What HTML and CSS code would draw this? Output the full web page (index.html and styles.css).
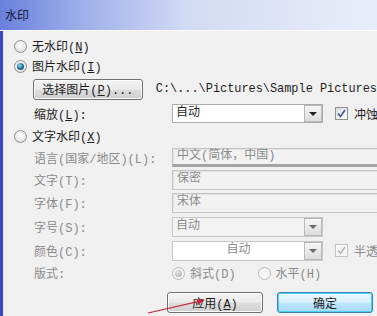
FILE: index.html
```html
<!DOCTYPE html>
<html lang="zh-CN">
<head>
  <meta charset="UTF-8" />
  <title>水印</title>
  <link rel="stylesheet" href="styles.css">
</head>
<body>
  <div class="titlebar">水印</div>

  <div class="dialog">
    <div class="row opt-none"><span class="radio"></span><span>无水印(<u>N</u>)</span></div>
    <div class="row opt-pic"><span class="radio on"></span><span>图片水印(<u>I</u>)</span></div>

    <div class="row field pick-row">
      <button class="btn pick">选择图片(<u>P</u>)...</button>
      <span class="path">C:\...\Pictures\Sample Pictures</span>
    </div>
    <div class="row field scale-row">
      <span class="label">缩放(<u>L</u>):</span>
      <div class="combo"><span class="val">自动</span><span class="drop"><i></i></span></div>
      <span class="check on">
        <svg width="11" height="11" viewBox="0 0 11 11"><path d="M2 5.5 L4.5 8.5 L9 2" fill="none" stroke="#3d5a9a" stroke-width="1.6"/></svg>
      </span>
      <span class="check-text">冲蚀</span>
    </div>

    <div class="row opt-text"><span class="radio"></span><span>文字水印(<u>X</u>)</span></div>

    <div class="row field off lang-row">
      <span class="label">语言(国家/地区)(L):</span>
      <div class="box lang">中文(简体，中国)</div>
    </div>
    <div class="row field off text-row">
      <span class="label">文字(T):</span>
      <div class="box">保密</div>
    </div>
    <div class="row field off font-row">
      <span class="label">字体(F):</span>
      <div class="box">宋体</div>
    </div>
    <div class="row field off size-row">
      <span class="label">字号(S):</span>
      <div class="combo dim"><span class="val">自动</span><span class="drop"><i></i></span></div>
    </div>
    <div class="row field off color-row">
      <span class="label">颜色(C):</span>
      <div class="combo"><span class="val center">自动</span><span class="drop"><i></i></span></div>
      <span class="check dim">
        <svg width="11" height="11" viewBox="0 0 11 11"><path d="M2 5.5 L4.5 8.5 L9 2" fill="none" stroke="#b4b4b4" stroke-width="1.4"/></svg>
      </span>
      <span class="check-text">半透</span>
    </div>
    <div class="row field off layout-row">
      <span class="label">版式:</span>
      <span class="radio dim on"></span><span class="layout-opt">斜式(D)</span>
      <span class="radio dim"></span><span>水平(H)</span>
    </div>

    <div class="row actions">
      <button class="btn">应用(<u>A</u>)</button>
      <button class="btn default">确定</button>
    </div>
  </div>

  <svg class="arrow" width="377" height="316" viewBox="0 0 377 316">
    <line x1="148" y1="313" x2="200" y2="301.2" stroke="#c42a3c" stroke-width="1.2"/>
    <polygon points="205,300 197.9,304.7 196.5,298.9" fill="#c42a3c"/>
  </svg>
</body>
</html>
```

FILE: styles.css
```css
body {
  margin: 0;
  width: 377px;
  height: 316px;
  overflow: hidden;
  position: relative;
  font-family: "Liberation Mono", "Noto Sans CJK SC", monospace;
  font-size: 12px;
  color: #1e1e1e;
  background: #f0f0f0;
}
u {
  text-decoration: underline;
}
.titlebar {
  height: 30px;
  line-height: 30px;
  padding-left: 5px;
  font-family: "Noto Sans CJK SC", sans-serif;
  color: #141a3a;
  background: linear-gradient(to right, #6a80dc 0%, #9eb0ea 22%, #d3dbf4 50%, #e9edf9 100%);
  border-bottom: 1px solid #fbfcff;
}
.dialog {
  height: 285px;
  border-left: 3px solid #3d46c2;
  box-shadow: inset 1px 0 0 #e4e8f8;
  padding: 5px 0 0 11px;
}
.row {
  display: flex;
  align-items: center;
  white-space: nowrap;
}
.field {
  padding-left: 20px;
}
.off {
  color: #8b8b8b;
}
.label {
  width: 138px;
  flex: none;
}

/* row heights */
.opt-none { height: 20px; }
.opt-pic { height: 20px; }
.pick-row { height: 26px; }
.scale-row { height: 23px; }
.opt-text { height: 22px; }
.lang-row { height: 21px; }
.text-row { height: 23px; }
.font-row { height: 23px; }
.size-row { height: 25px; }
.color-row { height: 23px; }
.layout-row { height: 22px; }

.radio {
  width: 11px;
  height: 11px;
  flex: none;
  border: 1px solid #8d8f90;
  border-radius: 50%;
  background: radial-gradient(circle at 50% 40%, #ffffff 0%, #e6e6e6 60%, #cfcfcf 100%);
  margin-right: 5px;
  position: relative;
}
.radio.on::after {
  content: "";
  position: absolute;
  left: 2px;
  top: 2px;
  width: 7px;
  height: 7px;
  border-radius: 50%;
  background: radial-gradient(circle at 40% 35%, #9fdcf4 0%, #2a7aa6 45%, #0f3b5a 100%);
}
.radio.dim {
  border-color: #b9b9b9;
  background: #f4f4f4;
}
.radio.dim.on::after {
  background: radial-gradient(circle at 40% 35%, #e8e8e8 0%, #bdbdbd 60%, #a8a8a8 100%);
}
.layout-row .radio:first-of-type {
  margin-left: 3px;
}
.layout-opt {
  margin-right: 22px;
}

.btn {
  width: 96px;
  height: 21px;
  padding: 0;
  font: inherit;
  color: #1e1e1e;
  border: 1px solid #707070;
  border-radius: 3px;
  background: linear-gradient(#f3f3f3 0%, #ebebeb 48%, #dddddd 52%, #cfcfcf 100%);
  box-shadow: inset 0 0 0 1px #fcfcfc;
}
.pick {
  width: 116px;
  margin-left: -1px;
}
.path {
  margin-left: 13px;
  font-size: 11.9px;
}
.btn.default {
  border-color: #3c7fb1;
  background: linear-gradient(#eaf6fd 0%, #d9f0fc 48%, #bee6fd 52%, #a7d9f5 100%);
  box-shadow: inset 0 0 0 1px #48d4f4;
}
.actions {
  margin-top: 8px;
  padding-left: 153px;
  gap: 14px;
}

.combo {
  width: 151px;
  height: 19px;
  box-sizing: border-box;
  display: flex;
  border: 1px solid #a9abb0;
  background: #fff;
  flex: none;
}
.combo.dim {
  height: 20px;
  border-color: #c6c6c6;
  background: #f3f3f3;
}
.color-row .combo {
  height: 20px;
  border-color: #c6c6c6;
}
.combo .val {
  flex: 1;
  padding-left: 3px;
  line-height: 17px;
}
.combo .val.center {
  text-align: center;
  padding-left: 0;
}
.combo .drop {
  width: 16px;
  margin: 0 0 0 0;
  border: 1px solid #b8b8b8;
  background: linear-gradient(#f6f6f6, #dcdcdc);
  display: flex;
  align-items: center;
  justify-content: center;
}
.combo .drop i {
  width: 0;
  height: 0;
  border-left: 4px solid transparent;
  border-right: 4px solid transparent;
  border-top: 4px solid #202020;
}
.combo.dim .drop i,
.color-row .drop i {
  border-top-color: #6a6a6a;
}

.check {
  width: 13px;
  height: 13px;
  box-sizing: border-box;
  flex: none;
  margin-left: 12px;
  margin-right: 5px;
  border: 1px solid #8f8f8f;
  background: linear-gradient(135deg, #dadada, #ffffff);
  display: flex;
  align-items: center;
  justify-content: center;
}
.check.dim {
  border-color: #c2c2c2;
  background: #f6f6f6;
}
.check-text {
  margin-left: 1px;
}

.box {
  width: 220px;
  height: 20px;
  box-sizing: border-box;
  flex: none;
  padding-left: 4px;
  line-height: 17px;
  border: 1px solid #c4c4c4;
  box-shadow: inset 1px 1px 0 #e2e2e2;
  background: #f2f2f2;
  color: #8b8b8b;
}
.box.lang {
  height: 19px;
  border-bottom: 3px solid #a4a4a4;
  line-height: 15px;
}

.arrow {
  position: absolute;
  left: 0;
  top: 0;
  pointer-events: none;
}
```
